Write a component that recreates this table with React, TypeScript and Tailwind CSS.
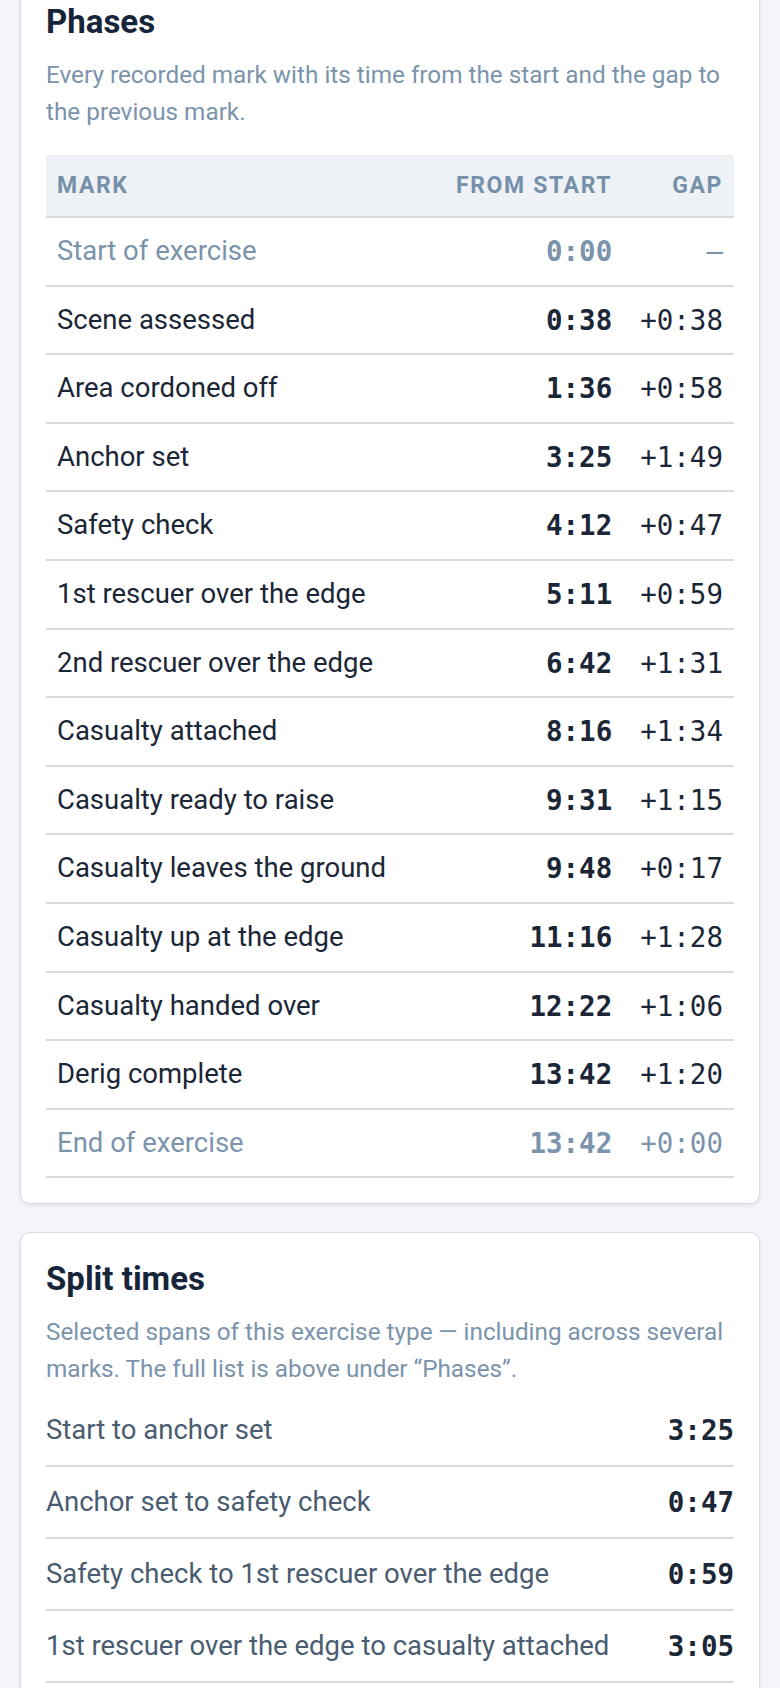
const phases = [
  { label: "Start of exercise", from: "0:00", gap: "–", muted: true },
  { label: "Scene assessed", from: "0:38", gap: "+0:38" },
  { label: "Area cordoned off", from: "1:36", gap: "+0:58" },
  { label: "Anchor set", from: "3:25", gap: "+1:49" },
  { label: "Safety check", from: "4:12", gap: "+0:47" },
  { label: "1st rescuer over the edge", from: "5:11", gap: "+0:59" },
  { label: "2nd rescuer over the edge", from: "6:42", gap: "+1:31" },
  { label: "Casualty attached", from: "8:16", gap: "+1:34" },
  { label: "Casualty ready to raise", from: "9:31", gap: "+1:15" },
  { label: "Casualty leaves the ground", from: "9:48", gap: "+0:17" },
  { label: "Casualty up at the edge", from: "11:16", gap: "+1:28" },
  { label: "Casualty handed over", from: "12:22", gap: "+1:06" },
  { label: "Derig complete", from: "13:42", gap: "+1:20" },
  { label: "End of exercise", from: "13:42", gap: "+0:00", muted: true },
];

const splits = [
  { label: "Start to anchor set", time: "3:25" },
  { label: "Anchor set to safety check", time: "0:47" },
  { label: "Safety check to 1st rescuer over the edge", time: "0:59" },
  { label: "1st rescuer over the edge to casualty attached", time: "3:05" },
];

const mono = "font-['DejaVu_Sans_Mono',monospace]";

function Card({ title, desc, children, className = "" }: { title: string; desc: string; children: React.ReactNode; className?: string }) {
  return (
    <section
      className={`rounded-[10px] border border-[#d6dce4] bg-white px-[25px] pt-[25px] pb-[25px] shadow-[0_2px_4px_rgba(15,23,42,0.08)] ${className}`}
    >
      <h2 className="text-[33px] leading-[41px] font-bold text-[#17253a]">{title}</h2>
      <p className="mt-[15px] text-[24.3px] leading-[36.5px] text-[#7b93ab]">{desc}</p>
      {children}
    </section>
  );
}

export default function App() {
  return (
    <div className="min-h-screen overflow-hidden bg-[#f3f5f9] px-5 font-['Roboto',sans-serif]">
      <Card
        className="-mt-[25px]"
        title="Phases"
        desc="Every recorded mark with its time from the start and the gap to the previous mark."
      >
        <table className="mt-[25px] w-full border-collapse">
          <thead>
            <tr className="border-b-2 border-[#d5dbe3] bg-[#eef2f7] text-[23px] leading-[35px] font-bold tracking-[0.07em] text-[#7690aa] uppercase">
              <th className="px-[11px] py-[13px] text-left">Mark</th>
              <th className="w-px px-[11px] py-[13px] text-right whitespace-nowrap">From start</th>
              <th className="w-px py-[13px] pr-[11px] pl-[17px] text-right whitespace-nowrap">Gap</th>
            </tr>
          </thead>
          <tbody>
            {phases.map((p) => (
              <tr
                key={p.label}
                className={`border-b-2 border-[#d5dbe3] text-[27.5px] leading-[40.6px] ${
                  p.muted ? "text-[#7b93ab]" : "text-[#1b2636]"
                }`}
              >
                <td className="px-[11px] py-[13px] text-left">{p.label}</td>
                <td className={`px-[11px] py-[13px] text-right font-bold whitespace-nowrap ${mono}`}>{p.from}</td>
                <td className={`py-[13px] pr-[11px] pl-[17px] text-right whitespace-nowrap ${mono}`}>{p.gap}</td>
              </tr>
            ))}
          </tbody>
        </table>
      </Card>

      <Card
        className="mt-[28px]"
        title="Split times"
        desc="Selected spans of this exercise type — including across several marks. The full list is above under “Phases”."
      >
        <ul className="mt-[8px]">
          {splits.map((s) => (
            <li
              key={s.label}
              className="flex items-center justify-between gap-4 border-b-2 border-[#d5dbe3] py-[16px] text-[27.5px] leading-[38px]"
            >
              <span className="text-[#4a5c70]">{s.label}</span>
              <span className={`font-bold whitespace-nowrap text-[#1b2636] ${mono}`}>{s.time}</span>
            </li>
          ))}
        </ul>
      </Card>
    </div>
  );
}
